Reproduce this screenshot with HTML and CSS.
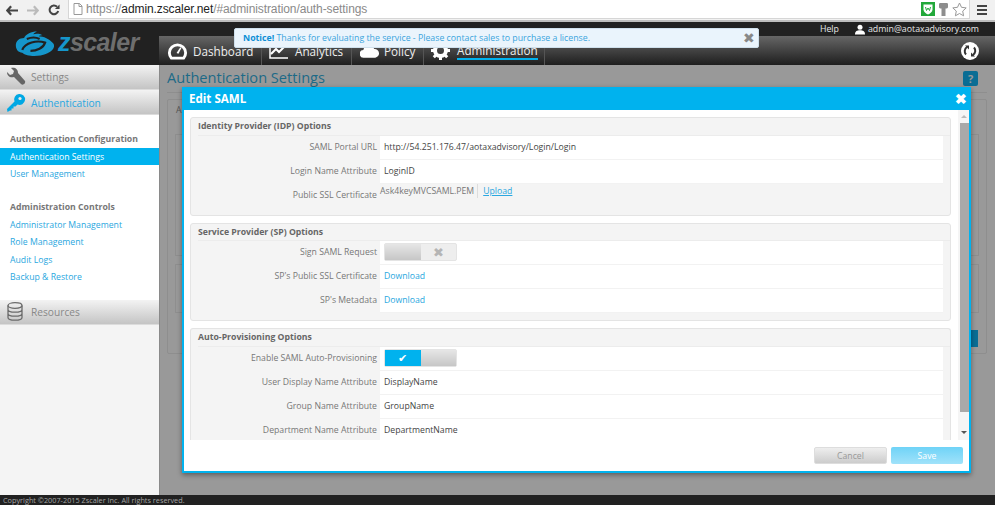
FILE: index.html
```html
<!DOCTYPE html>
<html lang="en">
<head>
    <meta charset="UTF-8">
    <title>Authentication Settings</title>
    <link rel="stylesheet" href="styles.css">
</head>
<body>
    <div class="browser-bar">
        <svg width="12" height="11" viewBox="0 0 14 12"><path d="M6 1 1.500 6 6 11M2 6h12" fill="none" stroke="#444" stroke-width="2.600"/></svg>
        <svg width="12" height="11" viewBox="0 0 14 12"><path d="M8 1l4.500 5L8 11M12 6H0" fill="none" stroke="#bbb" stroke-width="2.600"/></svg>
        <svg width="12" height="12" viewBox="0 0 13 13"><path d="M11 7.500A4.700 4.700 0 1 1 9.800 3" fill="none" stroke="#444" stroke-width="2.200"/><path d="M12.500 .5v5h-5z" fill="#444"/></svg>
        <div class="address">
            <svg width="10" height="12" viewBox="0 0 10 12"><path d="M1 .5h5.500L9 3v8.500H1zM6 .5V3.500h3" fill="#fff" stroke="#999"/></svg>
            <span class="url"><span class="url-dim">https://</span>admin.zscaler.net<span class="url-dim">/#administration/auth-settings</span></span>
            <svg width="14" height="14" viewBox="0 0 14 14"><rect width="14" height="14" fill="#22a83a"/><path d="M2.500 2.500h9v5c0 2.500-2.500 4-4.500 5-2-1-4.500-2.500-4.500-5z" fill="#fff"/><path d="M4.500 5l1 3.500L7 6l1.500 2.500 1-3.500" fill="none" stroke="#22a83a"/></svg>
            <svg width="9" height="13" viewBox="0 0 9 13"><path d="M1 0h7c1 0 1 1 1 2v2c0 1-1 1.500-2.500 1.500V13h-4V5.500C1 5.500 0 5 0 4V2c0-1 0-2 1-2z" fill="#8d8d8d"/></svg>
            <svg width="15" height="15" viewBox="0 0 15 15"><path d="M7.500 1l2 4.300 4.700.6-3.500 3.200.9 4.700-4.100-2.300-4.100 2.300.9-4.700L.8 5.900l4.700-.6z" fill="#fff" stroke="#999"/></svg>
        </div>
        <div class="menu-icon"><i></i><i></i><i></i></div>
    </div>

    <header class="top">
        <div class="logo">
            <svg width="43" height="27" viewBox="0 0 47 28"><path d="M2 16c0-5 4-8 9-8 2-4 8-7 14-7-2 1-3 2-4 3 3-1 7-1 10 1-2 0-3 .5-4 1 5 0 12 3 16 8 3 4-2 11-14 13-6 1-16 1-20-3-4 0-7-3-7-8z" fill="#1596cb"/><path d="M9 21c3-8 16-11 25-8-2 6-9 9-16 9M14 9c5-2 10-2 14 0" fill="none" stroke="#212121" stroke-width="2.400"/></svg>
            <span class="logo-text"><span class="logo-z">z</span>scaler</span>
        </div>
        <div class="top-right">
            <div class="user-links">
                <span class="help">Help</span>
                <svg width="10" height="11" viewBox="0 0 12 12"><circle cx="6" cy="3.200" r="3" fill="#fff"/><path d="M0 12c0-4 2.500-5 6-5s6 1 6 5z" fill="#fff"/></svg>
                <span>admin@aotaxadvisory.com</span>
            </div>
            <nav class="main-nav">
                <a class="tab tab-dash">
                    <svg width="19" height="18" viewBox="0 0 20 18"><path d="M3.500 16.500a8.500 8.500 0 1 1 13 0z" fill="none" stroke="#fff" stroke-width="3"/><path d="M9 11l4-6 1 1-3 6z" fill="#fff"/></svg>
                    Dashboard</a>
                <a class="tab tab-analytics">
                    <svg width="19" height="16" viewBox="0 0 19 16"><path d="M1 0v15h18" fill="none" stroke="#fff" stroke-width="1.500"/><path d="M2 11l5-5 3 3 6-6" fill="none" stroke="#fff" stroke-width="2"/></svg>
                    Analytics</a>
                <a class="tab tab-policy">
                    <svg width="19" height="14" viewBox="0 0 20 14"><path d="M4 14a4 4 0 0 1-.5-8 6 6 0 0 1 11.500-1 4.500 4.500 0 0 1 1 9z" fill="#fff"/></svg>
                    Policy</a>
                <a class="tab tab-admin">
                    <svg width="19" height="19" viewBox="0 0 19 19"><circle cx="9.500" cy="9.500" r="5.500" fill="none" stroke="#fff" stroke-width="4"/><path d="M9.500 0v4M9.500 15v4M0 9.500h4M15 9.500h4M2.800 2.800l2.800 2.800M13.400 13.400l2.800 2.800M2.800 16.200l2.800-2.800M13.400 5.600l2.800-2.800" stroke="#fff" stroke-width="3"/></svg>
                    <span class="tab-current">Administration</span></a>
                <span class="sync">
                    <svg width="18" height="18" viewBox="0 0 18 18"><circle cx="9" cy="9" r="9" fill="#fff"/><path d="M5 12.500A5 5 0 0 1 6 5M13 5.500A5 5 0 0 1 12 13" fill="none" stroke="#333" stroke-width="2"/><path d="M4 3.500h4v4zM14 14.500h-4v-4z" fill="#333"/></svg>
                </span>
            </nav>
        </div>
    </header>

    <div class="body-row">
        <aside class="sidebar">
            <div class="side-head">
                <svg width="20" height="20" viewBox="0 0 20 20"><path d="M1 5l3 3 3-1 1-3-3-3c4-1 7 1 7 5l7 8c1 2-2 5-4 3l-7-7C4 11 1 9 1 5z" fill="#666"/></svg>
                Settings</div>
            <div class="side-head side-head-active">
                <svg width="20" height="20" viewBox="0 0 19 20"><path d="M1 19l-.5-3L8 8.500A5.500 5.500 0 1 1 11 11.500L9 13.500H7v2H5v2H3.500z" fill="#00a8e4"/><circle cx="13.500" cy="5.500" r="1.600" fill="#e8e8e8"/></svg>
                Authentication</div>
            <div class="side-menu">
                <h4>Authentication Configuration</h4>
                <a class="selected">Authentication Settings</a>
                <a>User Management</a>
                <h4 class="second">Administration Controls</h4>
                <a>Administrator Management</a>
                <a>Role Management</a>
                <a>Audit Logs</a>
                <a>Backup &amp; Restore</a>
            </div>
            <div class="side-head side-head-res">
                <svg width="16" height="19" viewBox="0 0 16 19"><g fill="none" stroke="#6b6b6b" stroke-width="1.300"><ellipse cx="8" cy="3.500" rx="7" ry="2.800"/><path d="M1 3.500v12c0 3.600 14 3.600 14 0v-12M1 7.500c0 3.600 14 3.600 14 0M1 11.500c0 3.600 14 3.600 14 0"/></g></svg>
                Resources</div>
        </aside>
        <main class="content">
            <div class="title-row">
                <h1>Authentication Settings</h1>
                <span class="help-box">?</span>
            </div>
            <div class="back-panel">
                <span class="back-tab">A</span>
                <div class="back-box"></div>
                <div class="back-box back-box-low"></div>
                <span class="back-btn"></span>
            </div>
        </main>
    </div>

    <footer class="copyright">Copyright ©2007-2015 Zscaler Inc. All rights reserved.</footer>

    <div class="notice">
        <b>Notice!</b> Thanks for evaluating the service - Please contact sales to purchase a license.
        <span class="notice-close">✖</span>
    </div>

    <section class="modal">
        <div class="modal-head">
            <span>Edit SAML</span>
            <span class="modal-close">✖</span>
        </div>
        <div class="modal-scroll">
            <div class="modal-forms">
                <div class="group">
                    <h3>Identity Provider (IDP) Options</h3>
                    <div class="row"><label>SAML Portal URL</label><div class="val">http://54.251.176.47/aotaxadvisory/Login/Login</div></div>
                    <div class="row"><label>Login Name Attribute</label><div class="val">LoginID</div></div>
                    <div class="row"><label>Public SSL Certificate</label><div class="file"><span class="file-name">Ask4keyMVCSAML.PEM</span><a class="upload">Upload</a></div></div>
                </div>
                <div class="group group-sp">
                    <h3>Service Provider (SP) Options</h3>
                    <div class="row"><label>Sign SAML Request</label><div class="val"><span class="toggle"><i class="knob"></i><i class="side">✖</i></span></div></div>
                    <div class="row"><label>SP's Public SSL Certificate</label><div class="val"><a>Download</a></div></div>
                    <div class="row"><label>SP's Metadata</label><div class="val"><a>Download</a></div></div>
                </div>
                <div class="group group-last">
                    <h3>Auto-Provisioning Options</h3>
                    <div class="row"><label>Enable SAML Auto-Provisioning</label><div class="val"><span class="toggle"><i class="side side-on">✔</i><i class="knob"></i></span></div></div>
                    <div class="row"><label>User Display Name Attribute</label><div class="val">DisplayName</div></div>
                    <div class="row"><label>Group Name Attribute</label><div class="val">GroupName</div></div>
                    <div class="row"><label>Department Name Attribute</label><div class="val">DepartmentName</div></div>
                </div>
            </div>
            <div class="scrollbar">
                <i class="arrow-up"></i>
                <div class="thumb"></div>
                <i class="arrow-down"></i>
            </div>
        </div>
        <div class="modal-foot">
            <button class="btn-cancel">Cancel</button>
            <button class="btn-save">Save</button>
        </div>
    </section>
</body>
</html>
```

FILE: styles.css
```css
html, body {
    margin: 0;
    height: 505px;
    overflow: hidden;
}
body {
    font-family: "Open Sans", "Noto Sans", sans-serif;
    font-size: 8.700px;
    color: #555;
    background: #999;
    display: flex;
    flex-direction: column;
}
a {
    color: #2aa7e0;
}

/* browser chrome */
.browser-bar {
    height: 20px;
    flex: none;
    display: flex;
    align-items: center;
    gap: 9px;
    padding-left: 6px;
    background: #f1f1f1;
    border-bottom: 2px solid #bdbdbd;
}
.address {
    width: 902px;
    margin-left: -1px;
    height: 19px;
    align-self: flex-start;
    background: #fff;
    border: 1px solid #d6d6d6;
    border-top: 0;
    box-sizing: border-box;
    display: flex;
    align-items: center;
    gap: 4px;
    padding: 0 2px 0 4px;
}
.url {
    font-family: "Liberation Sans", Arial, sans-serif;
    font-size: 12px;
    letter-spacing: -.09px;
    color: #222;
    margin-right: auto;
    margin-left: -1px;
}
.url-dim {
    color: #8a8a8a;
}
.menu-icon {
    display: flex;
    flex-direction: column;
    gap: 2px;
    margin-left: -2px;
}
.menu-icon i {
    display: block;
    width: 10px;
    height: 2px;
    background: #444;
}

/* app header */
.top {
    height: 43px;
    flex: none;
    display: flex;
    background: #212121;
}
.logo {
    width: 159px;
    flex: none;
    display: flex;
    align-items: center;
    gap: 1px;
    padding: 0 0 0 14px;
    box-sizing: border-box;
}
.logo-text {
    font-family: "Liberation Sans", Arial, sans-serif;
    font-style: italic;
    font-weight: bold;
    font-size: 25px;
    letter-spacing: -.6px;
    color: #6e6e6e;
    margin-top: -3px;
}
.logo-z {
    color: #1596cb;
}
.top-right {
    flex: 1;
    display: flex;
    flex-direction: column;
}
.user-links {
    height: 14px;
    display: flex;
    justify-content: flex-end;
    align-items: center;
    gap: 3px;
    padding-right: 16px;
    color: #e6e6e6;
    font-size: 8.800px;
}
.help {
    margin-right: 13px;
}
.main-nav {
    height: 29px;
    display: flex;
    background: linear-gradient(#666, #1e1e1e);
}
.tab {
    display: flex;
    align-items: center;
    gap: 6px;
    padding-left: 8px;
    box-sizing: border-box;
    color: #eee;
    font-size: 11.700px;
    border-right: 1px solid #555;
}
.tab-dash { width: 103px; padding-left: 9px; }
.tab-analytics { width: 90px; padding-left: 7px; gap: 7px; }
.tab-policy { width: 72px; gap: 5px; }
.tab-admin { width: 121px; padding-left: 7px; gap: 7px; }
.tab-current {
    border-bottom: 2px solid #00b2ee;
    line-height: 15px;
    margin-top: 2px;
}
.sync {
    margin-left: auto;
    margin-right: 16px;
    align-self: center;
    height: 18px;
}

/* sidebar */
.body-row {
    flex: 1;
    display: flex;
    min-height: 0;
}
.sidebar {
    width: 159px;
    flex: none;
    background: #f4f4f4;
    border-right: 1px solid #8a8a8a;
}
.side-head {
    height: 25px;
    box-sizing: border-box;
    display: flex;
    align-items: center;
    gap: 5px;
    padding-left: 6px;
    font-size: 10.200px;
    color: #888;
    background: linear-gradient(#f3f3f3, #c4c4c4);
    border-bottom: 1px solid #dcdcdc;
}
.side-head-active {
    color: #2aa7e0;
    padding-top: 2px;
}
.side-head-res {
    padding-left: 7px;
    gap: 8px;
}
.side-menu {
    background: #fff;
    padding: 16px 0 14.600px;
}
.side-menu h4 {
    margin: 0;
    padding-left: 10px;
    height: 17px;
    line-height: 16px;
    font-size: 8.700px;
    font-weight: bold;
    color: #777;
}
.side-menu h4.second {
    margin-top: 16px;
}
.side-menu a {
    display: block;
    height: 17.400px;
    line-height: 18px;
    padding-left: 10px;
}
.side-menu a.selected {
    background: #00b2ee;
    color: #fff;
}

/* page behind the dialog */
.content {
    flex: 1;
    min-width: 0;
    padding: 0 8px 0 7px;
}
.title-row {
    height: 27px;
    display: flex;
    align-items: center;
    justify-content: space-between;
    padding-right: 9px;
    border-bottom: 1px solid #8e8e8e;
}
.title-row h1 {
    margin: -3px 0 0;
    font-size: 14.600px;
    font-weight: normal;
    color: #1d6a87;
}
.help-box {
    width: 15px;
    height: 15px;
    background: #0a6d94;
    border-radius: 2px;
    color: #999;
    font-size: 11px;
    text-align: center;
    line-height: 15px;
    font-weight: bold;
}
.back-panel {
    position: relative;
    margin-top: 6px;
    height: 255px;
    box-sizing: border-box;
    border: 1px solid #8e8e8e;
    border-radius: 2px;
}
.back-tab {
    display: block;
    height: 34px;
    box-sizing: border-box;
    padding: 4px 0 0 8px;
    color: #555;
}
.back-box {
    margin: 0 7px;
    height: 122px;
    border: 1px solid #8e8e8e;
    box-sizing: border-box;
}
.back-box-low {
    height: 49px;
    margin-top: 8px;
}
.back-btn {
    position: absolute;
    right: 8px;
    top: 230px;
    width: 7px;
    height: 17px;
    background: #0a6d94;
}
.copyright {
    height: 10px;
    flex: none;
    background: #212121;
    color: #a5a5a5;
    font-size: 7.300px;
    line-height: 10px;
    padding-left: 3px;
}

/* notice toast */
.notice {
    position: absolute;
    left: 234px;
    top: 28px;
    width: 525px;
    height: 20px;
    box-sizing: border-box;
    padding-left: 8px;
    background: #eaf4fc;
    border: 1px solid #cfe0ec;
    border-radius: 2px;
    color: #3aa4dc;
    font-size: 8.770px;
    line-height: 18px;
}
.notice b {
    color: #0d8fd6;
}
.notice-close {
    position: absolute;
    right: 3px;
    top: 0;
    color: #888;
    font-size: 14px;
}

/* dialog */
.modal {
    position: absolute;
    left: 182px;
    top: 87px;
    width: 789px;
    height: 386px;
    box-sizing: border-box;
    background: #fff;
    border: 2px solid #00b2ee;
    border-top: 0;
    box-shadow: 0 2px 5px rgba(0,0,0,.4);
    display: flex;
    flex-direction: column;
}
.modal-head {
    height: 23px;
    flex: none;
    margin: 0 -2px;
    padding: 0 4px 0 7px;
    display: flex;
    align-items: center;
    justify-content: space-between;
    background: #00b2ee;
    color: #fff;
    font-size: 11.600px;
    font-weight: bold;
}
.modal-close {
    font-size: 14px;
}
.modal-scroll {
    height: 330px;
    flex: none;
    display: flex;
    padding-top: 7px;
    box-sizing: border-box;
    overflow: hidden;
}
.modal-forms {
    flex: 1;
    min-width: 0;
    padding: 0 7px 0 6px;
}
.group {
    background: #f4f4f4;
    border: 1px solid #e4e4e4;
    border-radius: 3px;
    padding-bottom: 7px;
    margin-bottom: 7px;
}
.group h3 {
    margin: 0 0 0 7px;
    height: 18px;
    line-height: 16px;
    font-size: 8.700px;
    font-weight: bold;
    color: #666;
    border-bottom: 1px solid #ececec;
    box-sizing: border-box;
}
.group-sp h3 {
    height: 17px;
}
.row {
    display: flex;
    height: 24px;
    align-items: stretch;
}
.row label {
    width: 189px;
    flex: none;
    text-align: right;
    line-height: 23px;
    color: #777;
    box-sizing: border-box;
    padding-right: 3px;
}
.val {
    flex: 1;
    background: #fff;
    margin-right: 7px;
    border-bottom: 1px solid #f2f2f2;
    padding: 0 0 1px 4px;
    display: flex;
    align-items: center;
    color: #444;
}
.file {
    display: flex;
    align-items: flex-start;
    line-height: 14px;
}
.file-name {
    color: #777;
    padding-right: 3px;
    border-right: 1px solid #ddd;
}
.upload {
    margin-left: 5px;
    text-decoration: underline;
}
.toggle {
    display: flex;
    width: 73px;
    height: 18px;
    border: 1px solid #e4e4e4;
    border-radius: 2px;
    box-sizing: border-box;
    background: #eee;
}
.toggle i {
    display: block;
    width: 36px;
    font-style: normal;
    text-align: center;
    line-height: 16px;
}
.knob {
    background: linear-gradient(#e6e6e6, #c6c6c6);
}
.side {
    color: #b5b5b5;
    font-size: 13px;
}
.side-on {
    background: #00b2ee;
    color: #fff;
    font-size: 11px;
}
.group-last {
    margin-bottom: 0;
    border-bottom: 0;
}
.scrollbar {
    width: 11px;
    flex: none;
    margin-top: -7px;
    position: relative;
    background: #f5f5f5;
    padding-top: 13px;
    box-sizing: border-box;
}
.thumb {
    height: 289px;
    background: #a9a9a9;
    margin-left: 2px;
}
.arrow-up, .arrow-down {
    position: absolute;
    left: 3px;
    width: 0;
    height: 0;
    border-left: 3px solid transparent;
    border-right: 3px solid transparent;
}
.arrow-up {
    top: 5px;
    border-bottom: 3px solid #bbb;
}
.arrow-down {
    bottom: 6px;
    border-top: 3px solid #555;
}
.modal-foot {
    flex: 1;
    display: flex;
    justify-content: flex-end;
    align-items: flex-start;
    gap: 4px;
    padding: 7px 6px 0 0;
}
.modal-foot button {
    width: 73px;
    height: 17px;
    padding: 0;
    border-radius: 2px;
    font-family: inherit;
    font-size: 8.700px;
}
.modal-foot .btn-save {
    width: 72px;
}
.btn-cancel {
    color: #999;
    border: 1px solid #ddd;
    background: linear-gradient(#eee, #ccc);
}
.btn-save {
    color: #fff;
    border: 0;
    background: linear-gradient(#6fd3f7, #a0e2fa);
}
```
